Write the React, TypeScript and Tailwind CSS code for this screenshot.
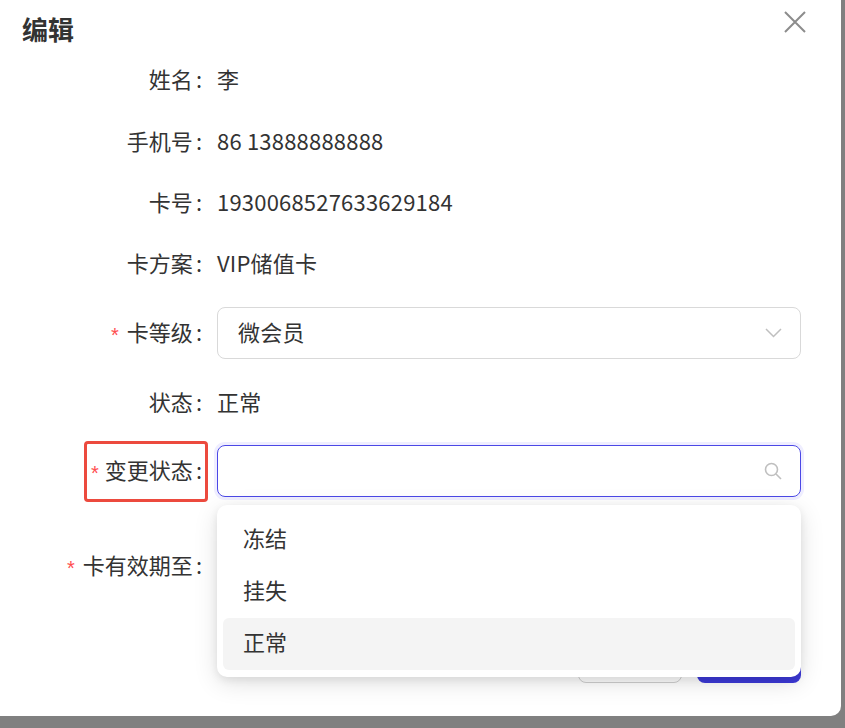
import React from 'react';

const font = { fontFamily: '"Noto Sans CJK SC", "Liberation Sans", sans-serif' };

const Req = () => (
  <span className="text-[#ff4d4f] mr-[8px] text-[20px] translate-y-[4px]" style={{ fontFamily: '"Liberation Sans", sans-serif' }}>
    *
  </span>
);

const Row: React.FC<{ label: string; required?: boolean; className: string; children?: React.ReactNode }> = ({
  label,
  required,
  className,
  children,
}) => (
  <div className={`flex items-center h-[52px] ${className}`}>
    <div className="w-[207px] flex justify-end items-center pr-[5px] pb-[4px] text-[#333]">
      {required && <Req />}
      <span>{label}</span>
      <span className="ml-[3px]">:</span>
    </div>
    <div className="ml-[10px] flex-1 flex items-center text-[#333] tracking-[0.2px]">{children}</div>
  </div>
);

export default function App() {
  return (
    <div className="w-[845px] h-[728px] bg-[#808080] overflow-hidden" style={font}>
      <div className="relative w-[841px] h-[716px] bg-white rounded-br-[10px]">
        {/* header */}
        <div className="flex justify-between items-start h-[54px]">
          <div className="pl-[22px] pt-[13px] text-[26px] leading-[32px] font-bold text-[#333]">编辑</div>
          <button className="mt-[11px] mr-[35px] w-[22px] h-[22px] text-[#8c8c8c]">
            <svg viewBox="0 0 22 22" width="22" height="22" fill="none" stroke="currentColor" strokeWidth="2">
              <path d="M1 1 L21 21 M21 1 L1 21" />
            </svg>
          </button>
        </div>

        {/* form */}
        <div className="text-[22px] leading-[30px] pr-[40px]">
          <Row label="姓名" className="mt-0"><span className="pb-[4px]">李</span></Row>
          <Row label="手机号" className="mt-[10px]"><span className="pb-[4px]">86 13888888888</span></Row>
          <Row label="卡号" className="mt-[9px]"><span className="pb-[4px]">1930068527633629184</span></Row>
          <Row label="卡方案" className="mt-[9px]"><span className="pb-[4px]">VIP储值卡</span></Row>
          <Row label="卡等级" required className="mt-[17px]">
            <div className="w-full h-[52px] border border-[#d9d9d9] rounded-[8px] flex items-center justify-between pl-[20px] pr-[18px]">
              <span className="pb-[4px]">微会员</span>
              <svg width="17" height="10" viewBox="0 0 17 10" fill="none" stroke="#bfbfbf" strokeWidth="1.5">
                <path d="M1 1 L8.5 8.5 L16 1" />
              </svg>
            </div>
          </Row>
          <Row label="状态" className="mt-[18px]"><span className="pb-[4px]">正常</span></Row>

          {/* 变更状态 with annotation box */}
          <div className="flex items-center h-[52px] mt-[16px]">
            <div className="w-[208px] flex justify-end">
              <div className="h-[61px] flex items-center border-[3px] border-[#ec4a3e] rounded-[4px] pl-[4px] pr-[3px] pb-[4px] text-[#333]">
                <span
                  className="text-[#ff4d4f] mr-[6px] text-[20px] translate-y-[4px]"
                  style={{ fontFamily: '"Liberation Sans", sans-serif' }}
                >
                  *
                </span>
                <span>变更状态</span>
                <span className="ml-[3px]">:</span>
              </div>
            </div>
            <div className="ml-[9px] flex-1">
              <div className="w-full h-[52px] border-[1.5px] border-[#4b48e6] rounded-[8px] ring-[3px] ring-[#efeeff] flex items-center justify-end pr-[18px]">
                <svg width="18" height="18" viewBox="0 0 18 18" fill="none" stroke="#bfbfbf" strokeWidth="1.6">
                  <circle cx="7.5" cy="7.5" r="6" />
                  <path d="M12 12 L17 17" />
                </svg>
              </div>
            </div>
          </div>

          <Row label="卡有效期至" required className="mt-[43px]" />

          {/* footer buttons (mostly hidden under the dropdown) */}
          <div className="flex justify-end gap-[15px] mt-[41px]">
            <button className="w-[104px] h-[50px] border border-[#d0d0d0] rounded-[8px] bg-white text-[#333]">取消</button>
            <button className="w-[104px] h-[50px] rounded-[8px] bg-[#3d3ad9] text-white">确定</button>
          </div>
        </div>

        {/* dropdown */}
        <div className="absolute left-[217px] top-[505px] w-[584px] h-[172px] bg-white rounded-[10px] shadow-[0_6px_24px_rgba(0,0,0,0.12),0_3px_8px_rgba(0,0,0,0.08)] pt-[9px] pb-[7px] px-[6px] text-[22px] text-[#333]">
          <div className="h-[52px] flex items-center pl-[20px] pb-[5px]">冻结</div>
          <div className="h-[52px] flex items-center pl-[20px] pb-[5px]">挂失</div>
          <div className="h-[52px] flex items-center pl-[20px] pb-[5px] bg-[#f4f4f4] rounded-[6px]">正常</div>
        </div>
      </div>
    </div>
  );
}
